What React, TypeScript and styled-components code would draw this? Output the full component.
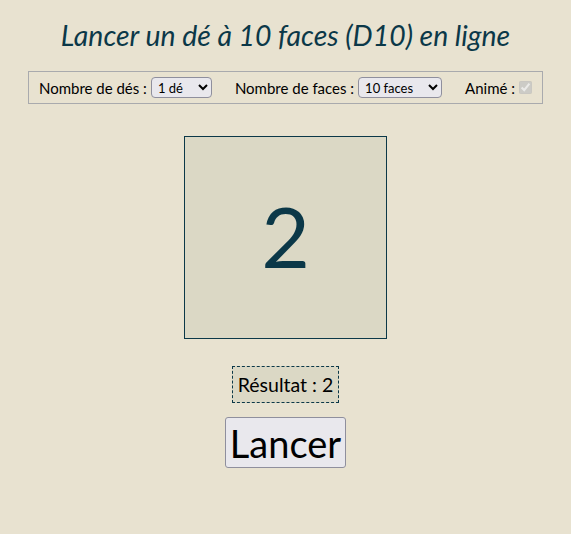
import React, { useState } from 'react';
import styled, { createGlobalStyle } from 'styled-components';

const GlobalStyle = createGlobalStyle`
  html, body {
    margin: 0;
    padding: 0;
    background: #e8e2d0;
  }
  body {
    font-family: Lato, "Open Sans", sans-serif;
    color: #000;
  }
`;

const Page = styled.div`
  display: flex;
  flex-direction: column;
  align-items: center;
  padding: 19px 28px 0;
`;

const Title = styled.h1`
  margin: 0;
  font-size: 28.4px;
  font-weight: 400;
  font-style: italic;
  color: #0b3848;
  line-height: 32px;
`;

const Toolbar = styled.div`
  align-self: stretch;
  margin-top: 20px;
  height: 31px;
  border: 1px solid #a9aaad;
  display: flex;
  align-items: center;
  justify-content: center;
  gap: 23px;
  font-size: 15px;
`;

const Field = styled.label`
  display: flex;
  align-items: center;
  gap: 4px;
`;

const Select = styled.select<{ $w: number }>`
  width: ${(p) => p.$w}px;
  height: 21px;
  font-family: inherit;
  font-size: 13px;
  border: 1px solid #8f8f9d;
  border-radius: 4px;
  background: #e9e8ed;
  padding: 0 2px;
`;

const Check = styled.input`
  margin: 0;
  width: 13px;
  height: 13px;
`;

const Die = styled.div`
  margin-top: 32px;
  width: 203px;
  height: 203px;
  border: 1px solid #0b3848;
  background: #dbd8c5;
  display: flex;
  align-items: center;
  justify-content: center;
  padding-bottom: 4px;
  box-sizing: border-box;
  font-size: 84px;
  color: #0b3848;
`;

const Result = styled.div`
  margin-top: 27px;
  padding: 4px 5px;
  border: 1px dashed #0b3848;
  background: #dbd8c5;
  font-size: 19.5px;
  line-height: 27px;
`;

const RollButton = styled.button`
  margin-top: 14px;
  height: 51px;
  padding: 0 4px;
  font-family: inherit;
  font-size: 38px;
  border: 1px solid #8f8f9d;
  border-radius: 3px;
  background: #e9e8ed;
  color: #000;
`;

export default function App() {
  const [count, setCount] = useState('1');
  const [faces, setFaces] = useState('10');
  const [value, setValue] = useState(2);

  return (
    <>
      <GlobalStyle />
      <Page>
        <Title>Lancer un dé à 10 faces (D10) en ligne</Title>
        <Toolbar>
          <Field>
            Nombre de dés :
            <Select $w={61} value={count} onChange={(e) => setCount(e.target.value)}>
              <option value="1">1 dé</option>
              <option value="2">2 dés</option>
              <option value="3">3 dés</option>
            </Select>
          </Field>
          <Field>
            Nombre de faces :
            <Select $w={84} value={faces} onChange={(e) => setFaces(e.target.value)}>
              <option value="6">6 faces</option>
              <option value="10">10 faces</option>
              <option value="20">20 faces</option>
            </Select>
          </Field>
          <Field>
            Animé :
            <Check type="checkbox" checked disabled readOnly />
          </Field>
        </Toolbar>
        <Die>{value}</Die>
        <Result>Résultat : {value}</Result>
        <RollButton onClick={() => setValue(1 + Math.floor(Math.random() * Number(faces)))}>
          Lancer
        </RollButton>
      </Page>
    </>
  );
}
